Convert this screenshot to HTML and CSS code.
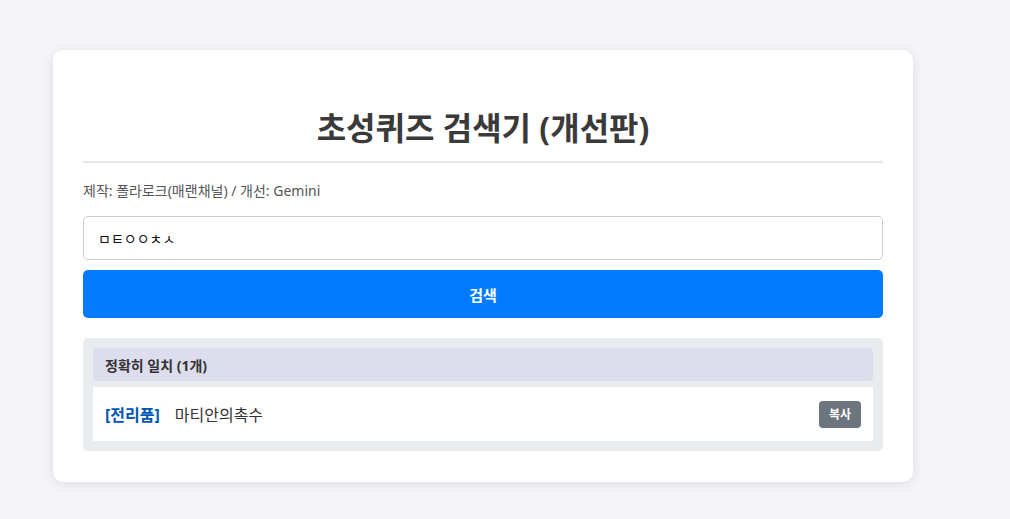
FILE: index.html
```html
<!DOCTYPE html>
<html lang="ko">
<head>
<meta charset="utf-8">
<title>초성퀴즈 검색기</title>
<link rel="stylesheet" href="styles.css">
</head>
<body>
<div class="container">
  <h1 class="title">초성퀴즈 검색기 (개선판)</h1>
  <p class="credit">제작: 폴라로크(매랜채널) / 개선: Gemini</p>
  <input class="search-input" type="text" value="ㅁㅌㅇㅇㅊㅅ">
  <button class="search-btn">검색</button>
  <div class="results">
    <div class="group-header">정확히 일치 (1개)</div>
    <div class="result-item">
      <span class="category">[전리품]</span>
      <span class="name">마티안의촉수</span>
      <button class="copy-btn">복사</button>
    </div>
  </div>
</div>
</body>
</html>
```
FILE: styles.css
```css
* { box-sizing: border-box; }
body {
  margin: 0;
  padding: 50px 0 37px 53px;
  background: #f4f4f9;
  font-family: "Noto Sans", "Noto Sans CJK KR", sans-serif;
  color: #333;
}
.container {
  width: 860px;
  background: #fff;
  border-radius: 10px;
  padding: 30px 30px 31px;
  box-shadow: 0 2px 12px rgba(0, 0, 0, 0.1);
}
.title {
  margin: 25px 0 0;
  padding-bottom: 10px;
  border-bottom: 2px solid #e6e6e6;
  text-align: center;
  font-size: 32px;
  line-height: 46px;
  font-weight: 700;
  color: #3a3a3a;
}
.credit {
  margin: 15px 0 12px;
  font-size: 14px;
  line-height: 26px;
  color: #555;
}
.search-input {
  display: block;
  width: 100%;
  height: 44px;
  padding: 0 14px;
  border: 1px solid #ccc;
  border-radius: 5px;
  font-family: "Noto Sans", "Noto Sans CJK KR", sans-serif;
  font-size: 14px;
  color: #111;
  background: #fff;
}
.search-btn {
  display: block;
  width: 100%;
  height: 48px;
  margin-top: 10px;
  border: 0;
  border-radius: 5px;
  background: #007bff;
  color: #fff;
  font-family: "Noto Sans", "Noto Sans CJK KR", sans-serif;
  font-size: 15px;
  font-weight: 700;
}
.results {
  margin-top: 20px;
  background: #e9ecef;
  border-radius: 5px;
  padding: 10px;
}
.group-header {
  height: 33px;
  padding: 0 12px;
  display: flex;
  align-items: center;
  background: #dddded;
  border-radius: 4px;
  font-size: 14px;
  font-weight: 700;
  color: #333;
}
.result-item {
  margin-top: 6px;
  height: 54px;
  background: #fff;
  display: flex;
  align-items: center;
  padding: 0 12px;
}
.category {
  font-size: 16px;
  font-weight: 700;
  color: #0056b3;
  margin-right: 15px;
}
.name {
  font-size: 16px;
  color: #333;
  flex: 1;
}
.copy-btn {
  height: 27px;
  padding: 0 10px;
  border: 0;
  border-radius: 4px;
  background: #6c757d;
  color: #fff;
  font-family: "Noto Sans", "Noto Sans CJK KR", sans-serif;
  font-size: 12px;
  font-weight: 700;
}
```
